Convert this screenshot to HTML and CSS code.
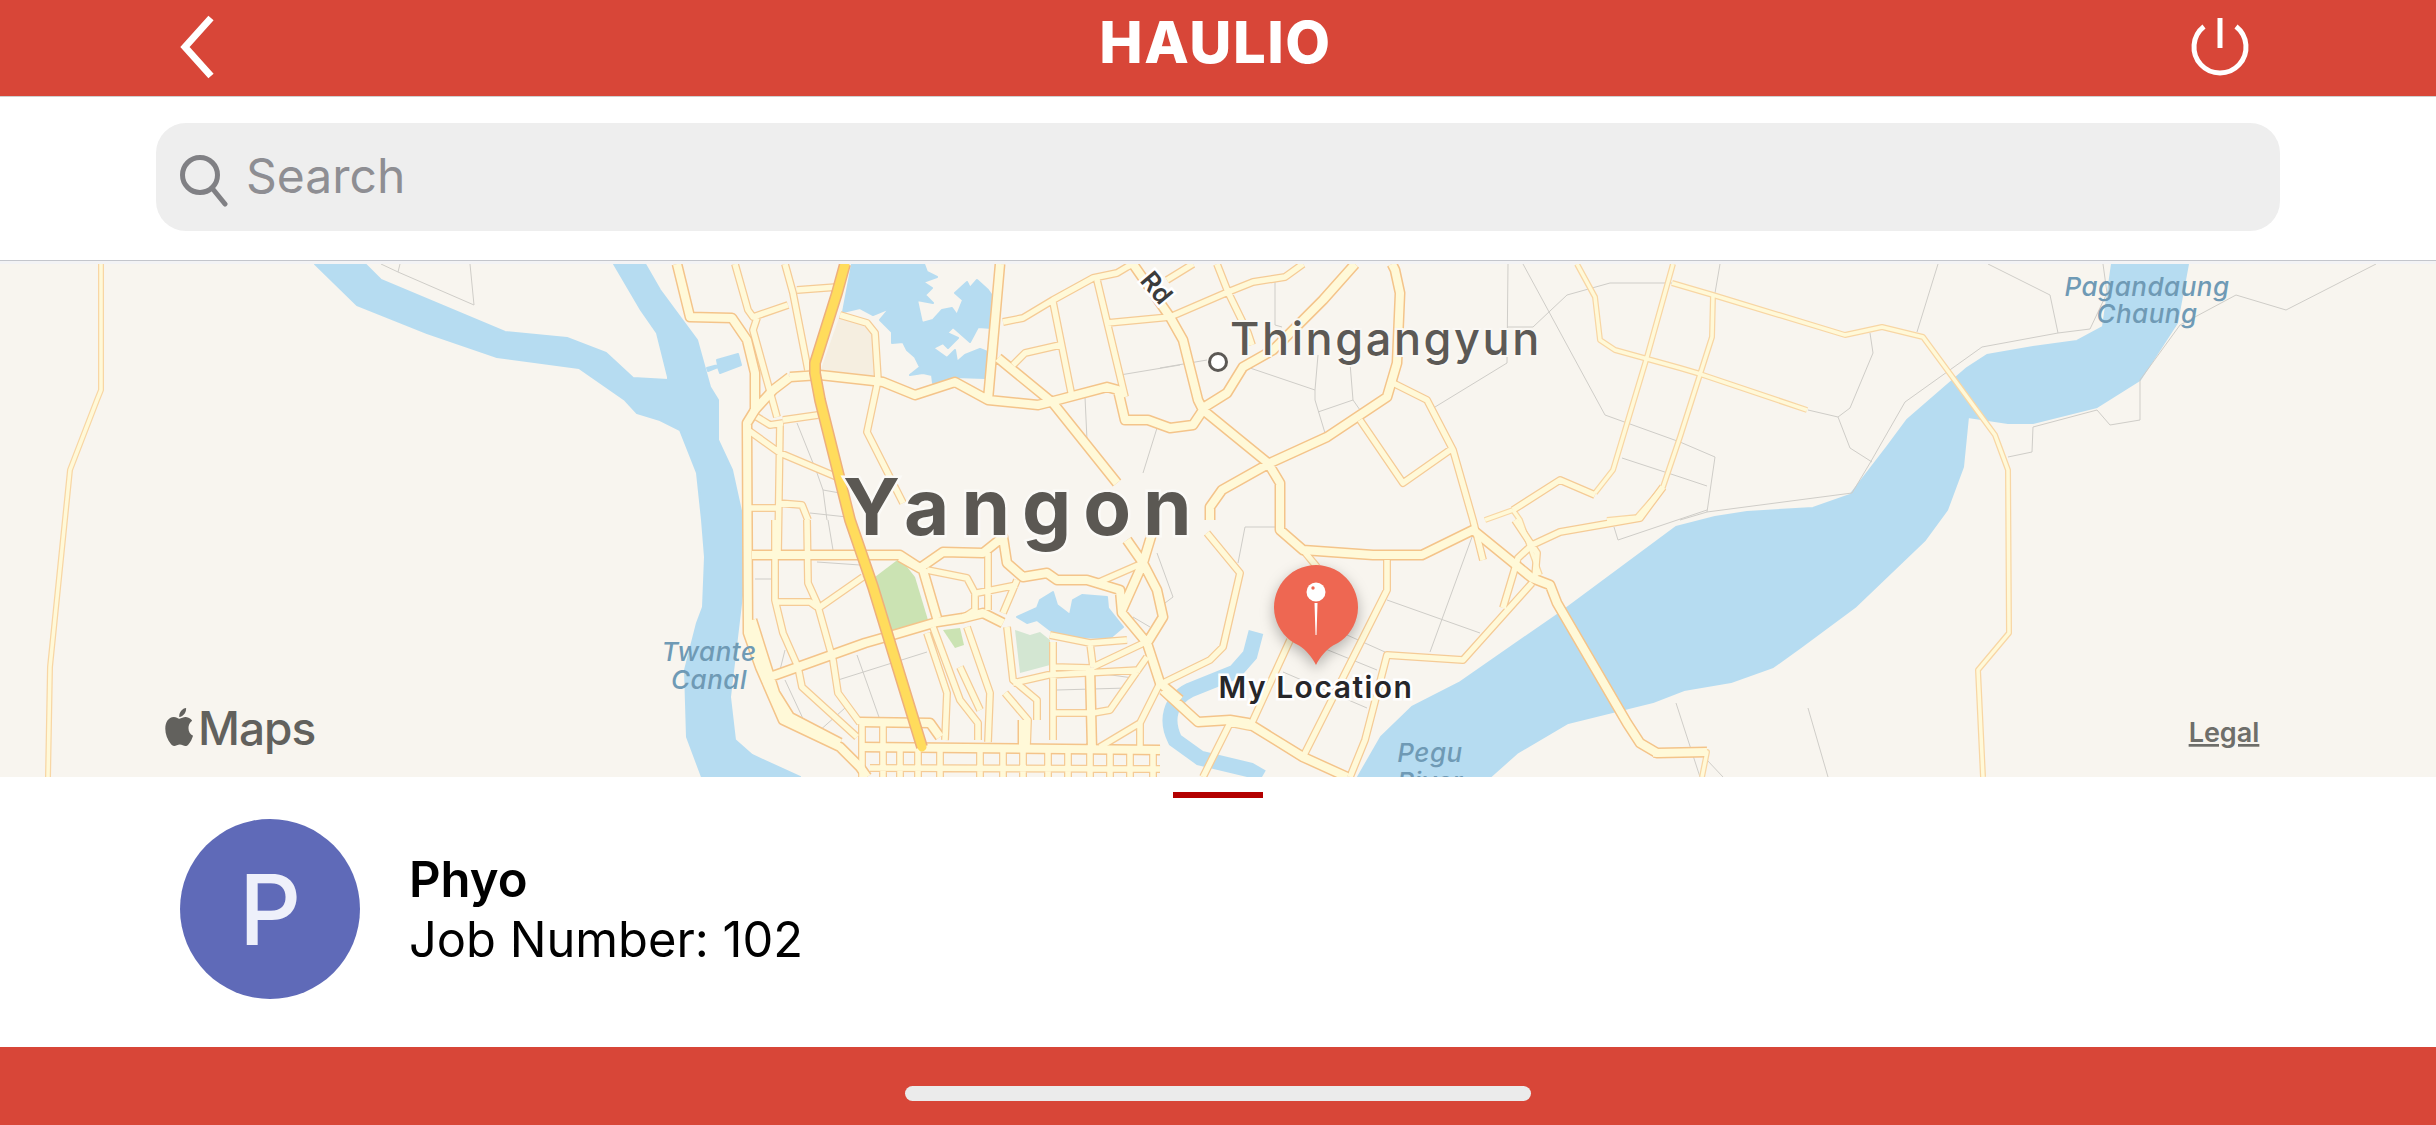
FILE: index.html
```html
<!DOCTYPE html>
<html lang="en">
<head>
<meta charset="utf-8">
<title>HAULIO</title>
<link rel="stylesheet" href="styles.css">
</head>
<body>
<div class="app">
  <header class="topbar">
    <svg class="icon-back" viewBox="0 0 40 64" width="40" height="64"><path d="M35 3 9 32l26 29"/></svg>
    <h1 class="brand">HAULIO</h1>
    <svg class="icon-power" viewBox="0 0 60 60" width="60" height="60"><path d="M14 9.5a26 26 0 1 0 32 0"/><path d="M30 1v30"/></svg>
  </header>
  <div class="searchbar">
    <div class="searchfield">
      <svg class="icon-search" viewBox="0 0 48 52" width="48" height="52"><circle cx="20" cy="20" r="17.5"/><path d="m32 33 13 16"/></svg>
      <span class="placeholder">Search</span>
    </div>
  </div>
  <div class="map-strip"></div>
  <div class="map">
    <svg class="map-art" viewBox="0 264 2436 513" width="2436" height="513">
      <defs>
        <path id="major" d="M677,264 690,317 732,318 747,340 755,373 755,410 747,423 748,633 760,667 783,720 840,747 860,767 867,777
          M790,377 773,390 753,412 M790,377 820,375 883,382 915,395 955,382 988,400 1038,405 1050,402 1107,387 1118,390 1125,420 1148,420 1170,428 1193,425 1203,410
          M1000,264 988,400 M998,358 1053,403 1117,483
          M1133,264 1170,317 1183,340 1198,400 1203,410 1268,463 1280,483 1280,530 1303,550 1373,555 1422,555 1473,530 1532,578 1550,585 1557,603 1627,723 1640,743 1657,753 1707,752
          M1210,520 1210,507 1222,490 1270,463 1327,437 1387,397 1397,363 1400,293 1395,270 1392,264
          M1355,264 1323,300 1273,350 1243,367 1227,393 1203,408
          M752,555 900,555 920,568 943,552 983,553 1003,537 1007,563 1023,577 1047,573 1057,580 1087,580 1120,590 1122,613 1147,643
          M770,677 865,643 893,635 937,622 963,618 983,613 1003,623
          M860,722 930,723 940,737 M860,747 1160,750 M1023,720 1023,747
          M900,557 923,570 937,618 M1147,643 1160,683 1180,700 M1090,668 1092,750
          M1163,690 1198,722 1230,720 1248,723 1303,757 1347,777
          M752,620 775,693 790,717 840,743 M1122,610 1143,563 1153,530 M1147,643 1163,617 1157,590 1143,563 1127,540"/>
        <path id="mid" d="M735,264 748,310 753,317 788,305 M785,264 793,293 808,370 M797,290 837,287
          M840,315 867,323 875,333 878,380 867,432 903,503
          M757,318 753,330 777,417 M783,420 818,415 M757,417 770,425 783,423 M780,423 778,555 M748,430 780,453 837,477
          M778,503 802,505 808,520 M750,508 778,508
          M1003,322 1023,318 1053,300 1093,278 1117,273 1127,267 1133,264
          M1053,302 1072,397 M1013,365 1025,353 1060,345 M1097,280 1125,397 M1107,323 1170,317
          M1167,280 1193,264 M1170,317 1228,292 1253,282 1285,277 1303,264 M1217,264 1228,292 1248,333 1252,345
          M775,520 775,600 783,633 798,667 802,687 857,737 M807,520 808,583 817,603 833,660 838,693 860,723
          M777,602 810,602 817,607 M820,607 863,577 M1017,580 1003,613 M977,593 1017,585
          M927,570 967,578 975,593 975,610 963,618 M988,553 988,610
          M927,633 947,693 945,740 M933,627 960,700 978,723 978,740 M967,627 990,693 988,742 M960,667 980,710
          M1007,627 1013,680 1037,700 1037,720 M1013,683 1048,675 1140,670 M1053,642 1053,740 M1050,635 1090,643 1127,640
          M1053,667 1090,668 M1090,643 1093,667 M1093,667 1150,640 M1053,713 1088,713 M1005,693 1028,720 1027,747
          M1093,713 1110,710 1147,657 M1100,747 1140,723 1140,747 M1160,683 1140,723 M1143,563 1097,583
          M862,722 862,777 M883,725 883,777 M900,747 900,777 M918,747 918,777 M940,747 940,777 M980,747 980,777 M1003,747 1003,777 M1023,747 1023,777 M1048,747 1048,777 M1068,747 1068,777 M1090,747 1090,777 M1110,747 1110,777 M1130,747 1130,777 M1153,747 1153,777
          M870,768 1160,769
          M1393,383 1427,400 1453,450 1473,520 1483,560 M1360,420 1403,483 1450,450
          M1515,520 1537,553 1535,577 M1663,487 1640,518 1560,532 1532,545 1518,558 1503,608
          M1532,583 1463,660 1387,655 1365,740 1350,777 M1387,560 1387,590 1303,757
          M1303,550 1317,567 M1290,640 1250,727 1230,723 1203,777
          M1207,533 1240,573 1223,647 1210,660 1163,683 M1513,510 1560,480 1595,495"/>
        <path id="far" d="M101,264 101,390 97,400 70,470 50,667 48,777
          M1577,264 1595,297 1600,340 1615,350 1680,368 1697,373 1807,410
          M1673,264 1647,357 1613,470 1595,493 M1485,520 1513,510
          M1513,510 1520,520 1540,575
          M1672,283 1713,295 1845,335 1882,327 1923,337 1995,435 2008,470 2009,633 1978,670 1983,777
          M1713,295 1712,337 1680,437 1663,487 1637,517 1607,520
          M1653,755 1707,752 1702,777"/>
      </defs>

      <rect class="land" x="0" y="264" width="2436" height="513"/>

      <path class="water" d="M315,264 365,264 381,280 505,332 567,338 606,353 633,378 668,380 668,377 657,333 641,310 614,264 645,264 660,290 697,340 710,387 718,400 718,440 732,470 743,520 743,587 730,697 735,740 752,755 800,777 702,777 687,737 685,670 697,623 703,607 705,557 702,520 697,473 680,430 660,420 637,413 625,400 579,368 497,357 427,333 357,305Z"/>
      <path class="water" d="M707,368 718,365 717,360 738,354 741,365 720,373 718,367 708,371Z"/>
      <path class="water" d="M852,264 924,264 927,272 937,277 923,282 932,288 925,295 933,303 917,300 922,323 933,320 942,310 952,308 957,315 963,300 955,293 967,282 970,288 977,280 988,290 995,300 992,328 978,327 970,342 953,327 947,333 958,338 948,348 943,343 933,348 947,358 955,350 957,362 965,355 980,349 990,353 985,378 955,377 933,383 932,375 923,373 910,375 920,367 915,357 907,350 903,342 892,343 892,332 880,320 890,308 873,315 860,308 843,312Z"/>
      <path class="water" d="M1017,617 1037,608 1040,600 1053,592 1057,605 1070,615 1073,600 1082,595 1107,597 1108,608 1123,627 1110,638 1073,637 1050,630 1037,620 1027,623Z"/>
      <path class="water" d="M2112,264 2188,264 2177,323 2140,380 2097,407 2033,423 2008,423 1968,417 1963,467 1947,510 1925,540 1855,607 1801,647 1773,667 1731,682 1684,690 1653,702 1568,723 1517,753 1490,777 1358,777 1381,737 1412,707 1459,683 1560,613 1676,527 1715,517 1747,512 1813,508 1850,495 1887,447 1907,420 1967,368 1987,355 2033,347 2077,341 2103,327Z"/>
      <path class="canal" d="M1256,632 1250,655 1235,672 1190,690C1170,700 1165,720 1175,740L1200,758 1250,770 1262,777"/>

      <path class="park" d="M900,558 915,577 928,620 890,633 875,577Z"/>
      <path class="park" d="M943,630 960,628 964,645 955,648Z"/>
      <path class="park-pale" d="M1015,630 1030,635 1040,632 1050,640 1050,665 1020,673Z"/>
      <path class="campus" d="M840,315 867,323 875,333 878,377 820,372Z"/>

      <path class="border" d="M381,264 398,272 474,305 470,264 M400,264 398,272
        M1275,280 1275,325 1282,327 M1160,368 1207,360 M1250,368 1315,390 1318,355 M1315,390 1315,400 1325,433 M1318,412 1353,400 1350,363 M1353,400 1360,410
        M1435,407 1507,363 1508,264 M1523,264 1605,415 1680,442 1715,457 1707,512 M1533,327 1567,295 1610,283 1680,283 M1622,458 1680,477 1707,486 M1507,327 1533,327
        M1720,264 1715,293 M1938,264 1917,332 M1988,264 2050,295 2058,333 2090,329 2107,293 2103,264
        M2058,333 1982,347 1905,402 1870,463 1852,493 1707,512 1680,520 M1870,333 1873,353 1850,408 1838,417 1808,410 M1838,417 1850,448 1872,462
        M2033,427 2097,410 2110,425 2140,420 2140,380 2180,325 2236,295 2286,310 2376,264 M2033,427 2032,452 2008,457
        M1614,527 1618,540 1707,510 M1676,703 1700,777 M1808,708 1828,777 M1707,760 1723,777
        M1387,600 1480,633 M1472,537 1430,652 M1347,635 1385,652 M1323,648 1377,670 M1283,672 1367,708 M1275,527 1245,527 1238,563
        M828,520 833,550 M817,562 860,565 M755,579 773,579 M785,650 780,670 M857,655 880,720 M838,680 927,652 M785,680 805,723 M845,708 818,732
        M797,423 817,473 823,490 827,520 M823,490 840,493 M810,513 847,517 M1085,397 1087,440 M1120,375 1180,365 M1157,428 1143,473
        M1157,553 1173,597 1165,603 M1133,617 1150,627 M1097,673 1133,678 M1057,690 1127,688"/>

      <use href="#far" class="far-case"/>
      <use href="#mid" class="mid-case"/>
      <use href="#major" class="major-case"/>
      <use href="#far" class="far-fill"/>
      <use href="#mid" class="mid-fill"/>
      <use href="#major" class="major-fill"/>
      <path class="hwy-case" d="M845,264 837,293 815,363 815,373 820,400 850,520 873,587 922,747"/>
      <path class="hwy-fill" d="M845,264 837,293 815,363 815,373 820,400 850,520 873,587 922,747"/>

      <text class="lbl-water" x="2147" y="296">Pagandaung</text>
      <text class="lbl-water" x="2147" y="323">Chaung</text>
      <text class="lbl-water" x="709" y="661">Twante</text>
      <text class="lbl-water" x="709" y="689">Canal</text>
      <text class="lbl-water" x="1430" y="762">Pegu</text>
      <text class="lbl-water" x="1430" y="791">River</text>
      <text class="lbl-road" transform="translate(1139 281) rotate(50)">Rd</text>

      <circle class="town-dot" cx="1218" cy="362" r="8.5"/>
      <text class="lbl-town" x="1230" y="355">Thingangyun</text>
      <text class="lbl-city" x="843" y="535">Yangon</text>

      <g class="pin">
        <path class="pin-body" d="M1316,665C1312,657 1306,650 1299,645.500A42,42 0 1 1 1333,645.500C1326,650 1320,657 1316,665Z"/>
        <circle class="pin-head" cx="1316" cy="592" r="9.500"/>
        <circle class="pin-dot" cx="1313" cy="588" r="1.700"/>
        <path class="pin-head" d="M1314.500,603H1317.500L1316.500,635H1315.500Z"/>
      </g>
      <text class="lbl-me" x="1316" y="698">My Location</text>

      <text class="maps-word" x="198" y="745">Maps</text>
      <svg class="apple" x="164" y="708" width="30" height="38" viewBox="3.700 3 16.400 18" preserveAspectRatio="none"><path d="M17.050 20.280c-.98.95-2.050.8-3.080.35-1.090-.46-2.090-.48-3.240 0-1.440.62-2.200.44-3.060-.35C2.790 15.250 3.510 7.590 9.050 7.310c1.350.07 2.290.74 3.080.8 1.180-.24 2.310-.93 3.570-.84 1.510.12 2.650.72 3.400 1.800-3.120 1.870-2.380 5.980.48 7.130-.57 1.500-1.310 2.990-2.540 4.090zM12.030 7.250c-.15-2.230 1.660-4.070 3.740-4.250.29 2.580-2.340 4.500-3.740 4.250z"/></svg>
      <text class="legal" x="2224" y="742">Legal</text>
    </svg>
  </div>
  <section class="sheet">
    <div class="grabber"></div>
    <div class="job">
      <div class="avatar">P</div>
      <div class="job-text">
        <div class="job-name">Phyo</div>
        <div class="job-number">Job Number: 102</div>
      </div>
    </div>
  </section>
  <footer class="bottombar"><div class="home-indicator"></div></footer>
</div>
</body>
</html>
```
FILE: styles.css
```css
* { box-sizing: border-box; }
html, body { margin: 0; padding: 0; background: #fff; }
body { font-family: Inter, "Liberation Sans", sans-serif; overflow: hidden; }
.app { width: 2436px; height: 1125px; display: flex; flex-direction: column; }

.topbar {
  height: 97px; flex: none; background: #d84638; border-bottom: 1px solid #cfcfcf;
  display: grid; grid-template-columns: 1fr auto 1fr; align-items: start; padding: 0 186px 0 176px;
}
.brand { margin: 0 0 0 5px; color: #fff; font-size: 58px; font-weight: 800; line-height: 84px; letter-spacing: 1.500px; }
.icon-back { fill: none; stroke: #fff; stroke-width: 7; stroke-linejoin: miter; margin-top: 15px; justify-self: start; }
.icon-power { fill: none; stroke: #fff; stroke-width: 5; margin-top: 17px; justify-self: end; }

.searchbar { height: 164px; flex: none; padding: 26px 156px 0; border-bottom: 1px solid #c4c6cc; }
.searchfield {
  height: 108px; background: #eeeeee; border-radius: 30px; display: flex; align-items: center; gap: 20px; padding: 0 0 2px 24px;
}
.icon-search { fill: none; stroke: #808084; stroke-width: 5; stroke-linecap: round; flex: none; margin-top: 10px; margin-right: -2px; }
.placeholder { color: #8e8e93; font-size: 48px; line-height: 56px; }

.map-strip { height: 3px; flex: none; background: #f3f3f5; }
.map { height: 513px; flex: none; overflow: hidden; }
.map-art { display: block; }
.land { fill: #f8f5ef; }
.water { fill: #b6dcf1; stroke: #b6dcf1; stroke-width: 2; stroke-linejoin: round; }
.canal { fill: none; stroke: #b6dcf1; stroke-width: 15; }
.park { fill: #cbe3b3; }
.park-pale { fill: #d3e6d2; }
.campus { fill: #f5eee0; }
.border { fill: none; stroke: #cfcdc8; stroke-width: 1; }

.major-case, .mid-case, .far-case, .major-fill, .mid-fill, .far-fill, .hwy-case, .hwy-fill { fill: none; stroke-linejoin: round; }
.major-case { stroke: #f4c48a; stroke-width: 11; }
.major-fill { stroke: #fff9d8; stroke-width: 8; }
.mid-case { stroke: #f5cb96; stroke-width: 8; }
.mid-fill { stroke: #fff9d8; stroke-width: 5.500; }
.far-case { stroke: #f8d6a4; stroke-width: 6; }
.far-fill { stroke: #fff9d8; stroke-width: 3.500; }
.hwy-case { stroke: #eeb07c; stroke-width: 12; }
.hwy-fill { stroke: #ffdc5c; stroke-width: 9; stroke-linecap: round; }

.lbl-water { fill: #6f9ab5; font-size: 26px; font-style: italic; font-weight: 500; text-anchor: middle; letter-spacing: .5px; }
.lbl-road { fill: #3c3c3c; font-size: 26px; font-weight: 600; stroke: #fff; stroke-width: 5px; paint-order: stroke; }
.town-dot { fill: #fff; stroke: #5c5955; stroke-width: 3; }
.lbl-town { fill: #5c5955; font-size: 45px; font-weight: 500; letter-spacing: 2.600px; stroke: #faf8f4; stroke-width: 4px; paint-order: stroke; }
.lbl-city { fill: #5b5853; font-size: 78px; font-weight: 700; letter-spacing: 12px; stroke: #fbfaf7; stroke-width: 5px; paint-order: stroke; }
.pin { filter: drop-shadow(0 5px 7px rgba(0, 0, 0, .28)); }
.pin-body { fill: #ee6752; }
.pin-head { fill: #fff; }
.pin-dot { fill: #ee6752; }
.lbl-me { fill: #27272a; font-size: 30px; font-weight: 600; letter-spacing: 1.500px; text-anchor: middle; stroke: #fff; stroke-width: 5px; paint-order: stroke; }
.maps-word { fill: #62615d; font-size: 46px; font-weight: 500; letter-spacing: -1px; }
.apple { fill: #62615d; }
.legal { fill: #6e6e6a; font-size: 27px; font-weight: 600; text-anchor: middle; text-decoration: underline; }

.sheet { flex: 1; background: #fff; padding-top: 15px; display: flex; flex-direction: column; }
.grabber { width: 90px; height: 6px; background: #b30000; align-self: center; flex: none; }
.job { display: flex; align-items: center; gap: 49px; padding: 21px 0 0 180px; }
.avatar {
  width: 180px; height: 180px; border-radius: 50%; background: #5f6ab8; color: #eef0fa; flex: none;
  display: flex; align-items: center; justify-content: center; font-size: 97px; font-weight: 500;
}
.job-text { color: #000; padding-top: 1px; }
.job-name { font-size: 49px; font-weight: 600; line-height: 60px; }
.job-number { font-size: 48.800px; font-weight: 400; line-height: 60px; }

.bottombar { height: 78px; flex: none; background: #d84638; display: flex; justify-content: center; padding-top: 39px; }
.home-indicator { width: 626px; height: 15px; border-radius: 8px; background: #ebebeb; }
```
